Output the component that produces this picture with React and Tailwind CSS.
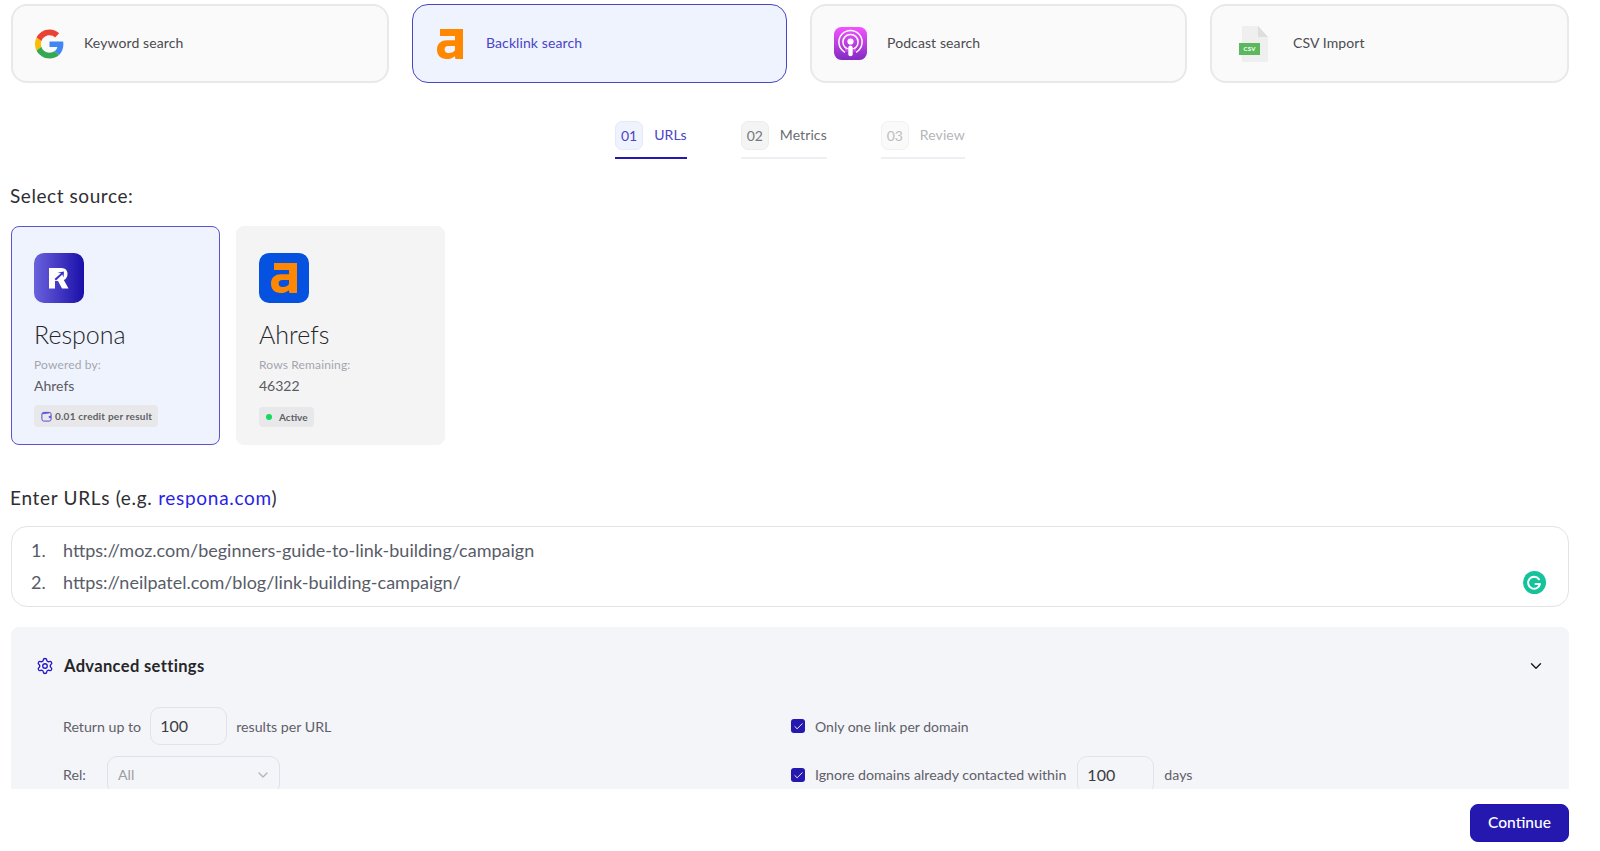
import React from "react";
import { Settings, ChevronDown, Check } from "lucide-react";

const GoogleIcon = () => (
  <svg viewBox="0 0 48 48" className="w-[29px] h-[30px] shrink-0">
    <path fill="#EA4335" d="M24 9.5c3.54 0 6.71 1.22 9.21 3.6l6.85-6.85C35.9 2.38 30.47 0 24 0 14.62 0 6.51 5.38 2.56 13.22l7.98 6.19C12.43 13.72 17.74 9.5 24 9.5z" />
    <path fill="#4285F4" d="M46.98 24.55c0-1.57-.15-3.09-.38-4.55H24v9.02h12.94c-.58 2.96-2.26 5.48-4.78 7.18l7.73 6c4.51-4.18 7.09-10.36 7.09-17.65z" />
    <path fill="#FBBC05" d="M10.53 28.59c-.48-1.45-.76-2.99-.76-4.59s.27-3.14.76-4.59l-7.98-6.19C.92 16.46 0 20.12 0 24c0 3.88.92 7.54 2.56 10.78l7.97-6.19z" />
    <path fill="#34A853" d="M24 48c6.48 0 11.93-2.13 15.89-5.81l-7.73-6c-2.15 1.45-4.92 2.3-8.16 2.3-6.26 0-11.57-4.22-13.47-9.91l-7.98 6.19C6.51 42.62 14.62 48 24 48z" />
  </svg>
);

const AhrefsA = ({ className, color = "#FF8800" }) => (
  <svg viewBox="0 0 26 30" className={className}>
    <path fill={color} fillRule="evenodd" d="M3 0H26V30H18.5L17.8 27.2C15.5 29.4 12.6 30 9.5 30C3.6 30 0 26.4 0 20.6C0 14.6 4 11.2 10 11.2H18V7H3ZM18 17H11.2C8.8 17 7.6 18.4 7.6 20.5C7.6 22.6 9 24 11.2 24C14.2 24 18 22.6 18 20.4Z" />
  </svg>
);

const PodcastIcon = () => (
  <svg viewBox="0 0 33 33" className="w-[33px] h-[33px] shrink-0">
    <defs>
      <linearGradient id="pod" x1="0" y1="0" x2="0" y2="1">
        <stop offset="0" stopColor="#F452FF" />
        <stop offset="1" stopColor="#832BC1" />
      </linearGradient>
    </defs>
    <rect width="33" height="33" rx="7.5" fill="url(#pod)" />
    <circle cx="16.5" cy="15" r="11.6" fill="none" stroke="#fff" strokeWidth="1.5" />
    <circle cx="16.5" cy="15" r="7.6" fill="none" stroke="#fff" strokeWidth="1.5" />
    <path d="M11 27 L22 27 L22 22 L11 22Z" fill="url(#pod)" />
    <circle cx="16.5" cy="14.5" r="3.1" fill="#fff" />
    <rect x="14.3" y="18.6" width="4.4" height="10.6" rx="2.2" fill="#fff" />
  </svg>
);

const CsvIcon = () => (
  <div className="relative w-[29px] h-[36px] shrink-0">
    <svg viewBox="0 0 29 36" className="w-[29px] h-[36px]">
      <path d="M3 0H19L29 11V36H3Z" fill="#EFEFEF" />
      <path d="M19 0L29 11H19Z" fill="#DEDEDE" />
      <rect x="0" y="17" width="21" height="12" fill="#5CB85C" />
    </svg>
    <span className="absolute left-0 top-[18px] w-[21px] text-center text-[6px] leading-[10px] font-bold text-white tracking-[0.3px]">CSV</span>
  </div>
);

const ResponaIcon = () => (
  <svg viewBox="0 0 50 50" className="w-[50px] h-[50px]">
    <defs>
      <linearGradient id="res" x1="0" y1="0" x2="1" y2="0">
        <stop offset="0" stopColor="#6B62DD" />
        <stop offset="1" stopColor="#1A0FA8" />
      </linearGradient>
    </defs>
    <rect width="50" height="50" rx="10" fill="url(#res)" />
    <path fill="#fff" d="M15 15H27.5C31.500 15 33.500 17.800 33.500 21C33.500 24 32 26.200 29.800 27L34.500 35.500H28L24 28H21V35.500H15Z" />
    <path fill="#3B31C4" d="M20.500 26L27 20.300L23.500 19.800L30 18.500L29.500 24.500L28.300 21.600L22 27.500Z" />
  </svg>
);

const GrammarlyIcon = () => (
  <svg viewBox="0 0 23 23" className="absolute right-[22px] bottom-[12px] w-[23px] h-[23px]">
    <circle cx="11.5" cy="11.5" r="11.5" fill="#15C39A" />
    <path d="M16 8.300A6 6 0 1 0 17 13H12.500" fill="none" stroke="#fff" strokeWidth="2" strokeLinecap="round" strokeLinejoin="round" />
  </svg>
);

const WalletIcon = () => (
  <svg viewBox="0 0 12 12" className="w-[11px] h-[11px] shrink-0" fill="none" stroke="#4a3fd6" strokeWidth="1">
    <rect x="1" y="1.500" width="10" height="9.500" rx="2" />
    <path d="M1.500 3L9 2M11 5.500L8.500 6.500L11 7.500" />
  </svg>
);

const TopCard = ({ icon, label, active, width, gap, pad }) => (
  <div
    className={
      active
        ? "h-[79px] flex items-center rounded-[16px] border border-[#4a44c6] bg-[#eff3fe] shrink-0"
        : "h-[79px] flex items-center rounded-[16px] border-2 border-[#e9e9eb] bg-[#fafafa] shrink-0"
    }
    style={{ width }}
  >
    <div className="shrink-0 flex items-center" style={{ width: gap, paddingLeft: pad }}>{icon}</div>
    <span className={active ? "pb-[2px] text-[14px] tracking-[0.1px] text-[#4a44c6]" : "pb-[2px] text-[14px] tracking-[0.1px] text-[#4b4b4f]"}>{label}</span>
  </div>
);

const Step = ({ num, label, state }) => {
  const active = state === "active";
  const mute = state === "mute";
  return (
    <div className={active ? "flex items-center gap-[11px] h-[38px] pb-[7px] border-b-2 border-[#2418af] box-border" : "flex items-center gap-[11px] h-[38px] pb-[7px] border-b-2 border-[#eeeff3] box-border"}>
      <span className={
        active
          ? "w-[28px] h-[29px] flex items-center justify-center rounded-[7px] text-[14px] border border-[#e4e9fa] bg-[#eff3fe] text-[#4a44c6]"
          : mute
            ? "w-[28px] h-[29px] flex items-center justify-center rounded-[7px] text-[14px] border border-[#f1f1f2] bg-[#fafafa] text-[#bdbdc0]"
            : "w-[28px] h-[29px] flex items-center justify-center rounded-[7px] text-[14px] border border-[#ececee] bg-[#f4f4f5] text-[#77777c]"
      }>{num}</span>
      <span className={active ? "pb-[2px] text-[14px] tracking-[0.1px] text-[#4a44c6]" : mute ? "pb-[2px] text-[14px] tracking-[0.1px] text-[#b5b5b8]" : "pb-[2px] text-[14px] tracking-[0.1px] text-[#6b6b70]"}>{label}</span>
    </div>
  );
};

const SourceCard = ({ active, icon, name, sub, value, children }) => (
  <div className={
    active
      ? "w-[209px] h-[219px] box-border rounded-[8px] border border-[#5a55cc] bg-[#eff3fe] pl-[22px] pt-[26px]"
      : "w-[209px] h-[219px] box-border rounded-[8px] border border-[#f4f4f5] bg-[#f4f4f5] pl-[22px] pt-[26px]"
  }>
    {icon}
    <div className="mt-[17px] text-[25px] font-light leading-[28px] text-[#26262a]">{name}</div>
    <div className="mt-[9px] text-[12px] tracking-[0.15px] leading-[16px] text-[#a4a6ad]">{sub}</div>
    <div className="mt-[3px] text-[14px] leading-[20px] text-[#5a5a60]">{value}</div>
    {children}
  </div>
);

const Checkbox = () => (
  <span className="w-[14px] h-[14px] rounded-[3px] bg-[#2418af] flex items-center justify-center shrink-0">
    <Check size={11} color="#fff" strokeWidth={2} />
  </span>
);

export default function App() {
  return (
    <div className="w-[1600px] h-[851px] overflow-hidden bg-white box-border pt-[4px] pl-[11px] pr-[31px] font-['Lato',sans-serif]">
      <div className="flex gap-[23px]">
        <TopCard width="378px" gap="71px" pad="22px" label="Keyword search" icon={<GoogleIcon />} />
        <TopCard width="375px" gap="73px" pad="24px" active label="Backlink search" icon={<AhrefsA className="w-[26px] h-[30px]" />} />
        <TopCard width="377px" gap="75px" pad="22px" label="Podcast search" icon={<PodcastIcon />} />
        <TopCard width="359px" gap="81px" pad="27px" label="CSV Import" icon={<CsvIcon />} />
      </div>

      <div className="mt-[38px] flex justify-center gap-[54px]">
        <Step num="01" label="URLs" state="active" />
        <Step num="02" label="Metrics" />
        <Step num="03" label="Review" state="mute" />
      </div>

      <div className="mt-[25px] -ml-[1px] text-[19px] tracking-[0.57px] leading-[24px] text-[#2e2e32]">Select source:</div>

      <div className="mt-[18px] flex gap-[16px]">
        <SourceCard active name="Respona" sub="Powered by:" value="Ahrefs" icon={<ResponaIcon />}>
          <div className="mt-[9px] w-[124px] h-[22px] rounded-[4px] bg-[#e8e8ea] flex items-center gap-[3px] pl-[7px]">
            <WalletIcon />
            <span className="text-[10px] font-bold tracking-[0.22px] text-[#5f5f64]">0.01 credit per result</span>
          </div>
        </SourceCard>
        <SourceCard name="Ahrefs" sub="Rows Remaining:" value="46322" icon={
          <div className="w-[50px] h-[50px] rounded-[10px] bg-[#0552e0] flex items-center justify-center">
            <AhrefsA className="w-[26px] h-[30px]" />
          </div>
        }>
          <div className="mt-[11px] w-[55px] h-[20px] rounded-[4px] bg-[#e8e8ea] flex items-center gap-[7px] pl-[7px]">
            <span className="w-[6px] h-[6px] rounded-full bg-[#16d95f]" />
            <span className="text-[10px] font-bold text-[#5f5f64]">Active</span>
          </div>
        </SourceCard>
      </div>

      <div className="mt-[41px] -ml-[1px] text-[19px] tracking-[0.7px] leading-[24px] text-[#2e2e32]">
        Enter URLs (e.g. <span className="text-[#2a1fe6]">respona.com</span>)
      </div>

      <div className="relative mt-[16px] h-[81px] box-border rounded-[16px] border border-[#e3e3e6] pt-[7.5px] text-[18px] text-[#585c68]">
        <div className="flex h-[32px] items-center">
          <span className="w-[51px] pl-[19px] shrink-0">1.</span>
          <span>https://moz.com/beginners-guide-to-link-building/campaign</span>
        </div>
        <div className="flex h-[32px] items-center">
          <span className="w-[51px] pl-[19px] shrink-0">2.</span>
          <span>https://neilpatel.com/blog/link-building-campaign/</span>
        </div>
        <GrammarlyIcon />
      </div>

      <div className="mt-[20px] h-[162px] overflow-hidden rounded-t-[8px] bg-[#f4f5f9] pt-[27px] pl-[25px] pr-[25px]">
        <div className="flex items-center h-[24px]">
          <Settings size={18} color="#2418c8" strokeWidth={1.8} />
          <span className="ml-[10px] text-[16.500px] tracking-[0.35px] font-bold text-[#26262a]">Advanced settings</span>
          <ChevronDown size={18} color="#222" strokeWidth={2} className="ml-auto -mr-[1px] -mt-[1px]" />
        </div>
        <div className="mt-[29px] grid grid-cols-[755px_1fr] gap-y-[11px] text-[14.200px] text-[#5f6068]">
          <div className="flex items-center h-[38px] pl-[27px]">
            <span className="pt-[1px]">Return up to</span>
            <span className="ml-[9px] w-[77px] h-[38px] box-border rounded-[10px] border border-[#e2e3ea] flex items-center pl-[9px] text-[16px] text-[#3c3c42]">100</span>
            <span className="pt-[1px] ml-[9px]">results per URL</span>
          </div>
          <div className="flex items-center h-[38px]">
            <Checkbox />
            <span className="pt-[1px] ml-[10px] text-[14px]">Only one link per domain</span>
          </div>
          <div className="flex items-center h-[38px] pl-[27px]">
            <span className="w-[44px]">Rel:</span>
            <span className="w-[173px] h-[38px] box-border rounded-[10px] border border-[#dfe1ea] flex items-center justify-between pl-[10px] pr-[8px] text-[#9c9da3]">
              All
              <ChevronDown size={16} color="#b4b5ba" strokeWidth={2} />
            </span>
          </div>
          <div className="flex items-center h-[38px]">
            <Checkbox />
            <span className="ml-[10px]">Ignore domains already contacted within</span>
            <span className="ml-[11px] w-[77px] h-[38px] box-border rounded-[10px] border border-[#e2e3ea] flex items-center pl-[9px] text-[16px] text-[#3c3c42]">100</span>
            <span className="ml-[10px]">days</span>
          </div>
        </div>
      </div>

      <div className="mt-[15px] flex justify-end">
        <button className="w-[99px] h-[38px] pb-[1px] rounded-[8px] border border-[#1f12b8] bg-[#2418af] text-[15.500px] font-medium text-white">Continue</button>
      </div>
    </div>
  );
}
